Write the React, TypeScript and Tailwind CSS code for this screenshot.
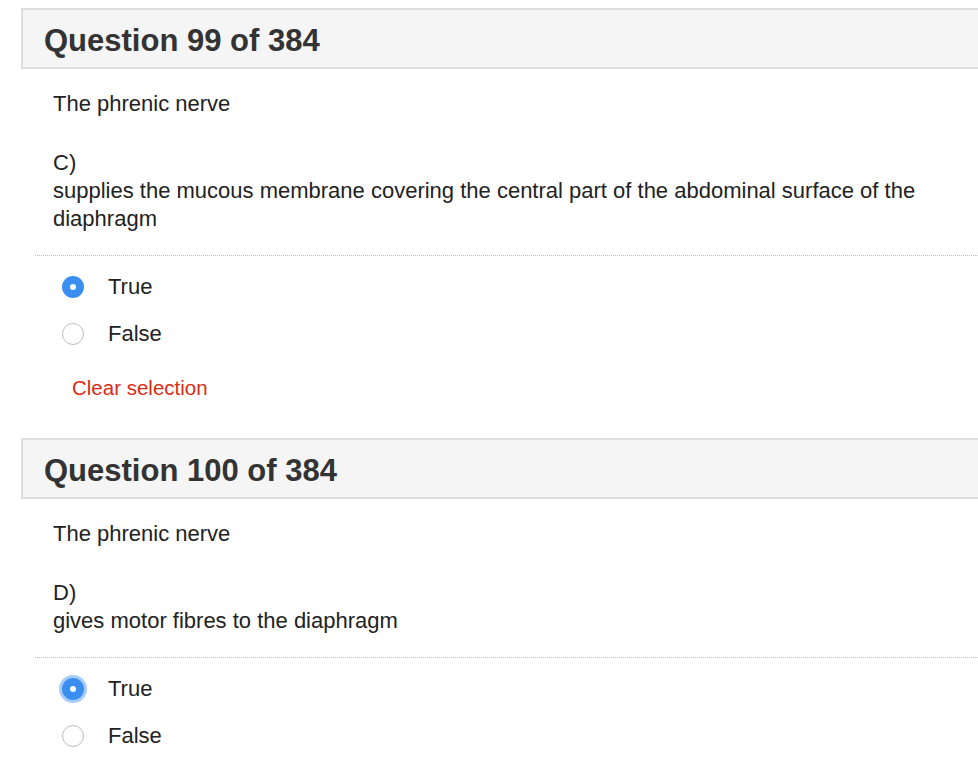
import React from "react";

type Question = {
  num: number;
  total: number;
  stem: string;
  letter: string;
  option: string;
  answer: "True" | "False";
  focused?: boolean;
  showClear?: boolean;
};

const questions: Question[] = [
  {
    num: 99,
    total: 384,
    stem: "The phrenic nerve",
    letter: "C)",
    option:
      "supplies the mucous membrane covering the central part of the abdominal surface of the diaphragm",
    answer: "True",
    showClear: true,
  },
  {
    num: 100,
    total: 384,
    stem: "The phrenic nerve",
    letter: "D)",
    option: "gives motor fibres to the diaphragm",
    answer: "True",
    focused: true,
  },
];

function Radio({ checked, focused }: { checked: boolean; focused?: boolean }) {
  if (checked) {
    return (
      <span
        className={
          "flex h-[22px] w-[22px] items-center justify-center rounded-full bg-[#3a8ef0] " +
          (focused ? "shadow-[0_0_0_3px_rgba(58,142,240,0.45)]" : "")
        }
      >
        <span className="h-[6px] w-[6px] rounded-full bg-white" />
      </span>
    );
  }
  return <span className="h-[22px] w-[22px] rounded-full border border-[#bdbdbd] bg-white" />;
}

function QuestionBlock({ q }: { q: Question }) {
  return (
    <section>
      <div className="flex h-[61px] items-center border-y-2 border-l-2 border-[#dedede] bg-[#f5f5f5] pl-[21px] pt-[5px]">
        <h2 className="text-[31px] font-bold text-[#333]">
          Question {q.num} of {q.total}
        </h2>
      </div>
      <div className="pl-[32px] pr-[24px] text-[22px] leading-[28px] text-[#222]">
        <p className="mt-[21px]">{q.stem}</p>
        <p className="mt-[31px]">{q.letter}</p>
        <p>{q.option}</p>
      </div>
      <div className="ml-[14px] mt-[22px] border-t border-dotted border-[#bdbdbd]" />
      <div className="mt-[7px] pl-[41px] text-[22px] text-[#222]">
        {(["True", "False"] as const).map((label) => (
          <label key={label} className="flex h-[47px] items-center">
            <Radio checked={q.answer === label} focused={q.focused} />
            <span className="ml-[24px]">{label}</span>
          </label>
        ))}
        {q.showClear && (
          <p className="mt-[17px] pl-[10px] text-[20.5px] leading-[28px] text-[#d92b12]">Clear selection</p>
        )}
      </div>
    </section>
  );
}

export default function App() {
  return (
    <div className="min-h-screen bg-white pl-[21px] pt-[8px] font-['Liberation_Sans',Arial,sans-serif]">
      <div className="flex flex-col gap-[36px]">
        {questions.map((q) => (
          <QuestionBlock key={q.num} q={q} />
        ))}
      </div>
    </div>
  );
}
